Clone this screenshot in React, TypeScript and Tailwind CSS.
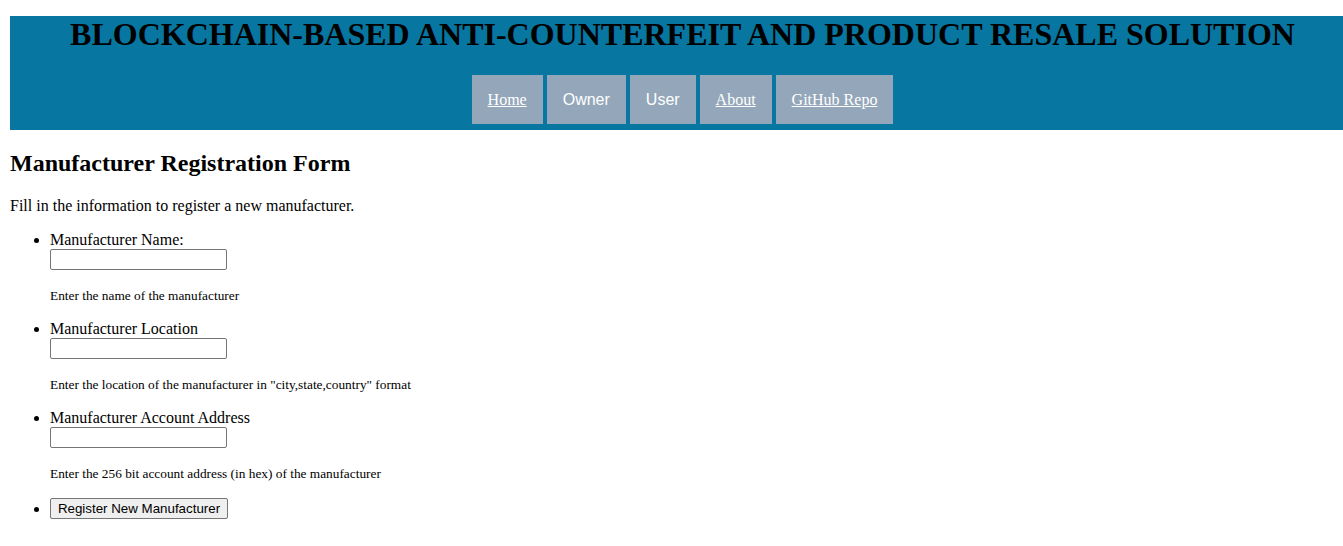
import React from 'react';

export default function App() {
  const navItems = [
    { label: 'Home', link: true },
    { label: 'Owner', link: false },
    { label: 'User', link: false },
    { label: 'About', link: true },
    { label: 'GitHub Repo', link: true },
  ];

  const fields = [
    {
      label: 'Manufacturer Name:',
      hint: 'Enter the name of the manufacturer',
    },
    {
      label: 'Manufacturer Location',
      hint: 'Enter the location of the manufacturer in "city,state,country" format',
    },
    {
      label: 'Manufacturer Account Address',
      hint: 'Enter the 256 bit account address (in hex) of the manufacturer',
    },
  ];

  return (
    <div className="min-h-[546px] w-full overflow-hidden bg-white pt-[16px] pl-[10px] font-['Liberation_Serif',serif] text-[16px] text-black">
      {/* Header */}
      <header className="w-[1345px] bg-[#0776a0] pb-[6px]">
        <h1 className="text-center text-[32px] font-bold leading-[37px]">
          BLOCKCHAIN-BASED ANTI-COUNTERFEIT AND PRODUCT RESALE SOLUTION
        </h1>
        <nav className="mt-[22px] flex justify-center gap-[4px]">
          {navItems.map((item) =>
            item.link ? (
              <a
                key={item.label}
                href="#"
                className="block bg-[#94a7ba] px-[16px] py-[15px] leading-[19px] text-white underline"
              >
                {item.label}
              </a>
            ) : (
              <button
                key={item.label}
                className="block bg-[#94a7ba] px-[16px] py-[15px] font-['Liberation_Sans',sans-serif] text-[16px] leading-[19px] text-white"
              >
                {item.label}
              </button>
            )
          )}
        </nav>
      </header>

      {/* Form */}
      <h2 className="mt-[19px] text-[24px] font-bold leading-[28px]">Manufacturer Registration Form</h2>
      <p className="mt-[20px] leading-[18px]">Fill in the information to register a new manufacturer.</p>

      <ul className="mt-[16px] list-disc pl-[40px]">
        {fields.map((f) => (
          <li key={f.label} className="mb-[17px] leading-[18px]">
            <label className="block">{f.label}</label>
            <input
              type="text"
              className="block h-[21px] w-[177px] rounded-[2px] border border-[#767676] px-[2px] text-[13px]"
            />
            <p className="mt-[18px] text-[13.33px] leading-[15px]">{f.hint}</p>
          </li>
        ))}
        <li className="leading-[21px]">
          <button className="h-[21px] w-[178px] rounded-[2px] border border-[#767676] bg-[#efefef] px-[6px] align-top font-['Liberation_Sans',sans-serif] text-[13.33px] leading-[19px] text-black">
            Register New Manufacturer
          </button>
        </li>
      </ul>
    </div>
  );
}
